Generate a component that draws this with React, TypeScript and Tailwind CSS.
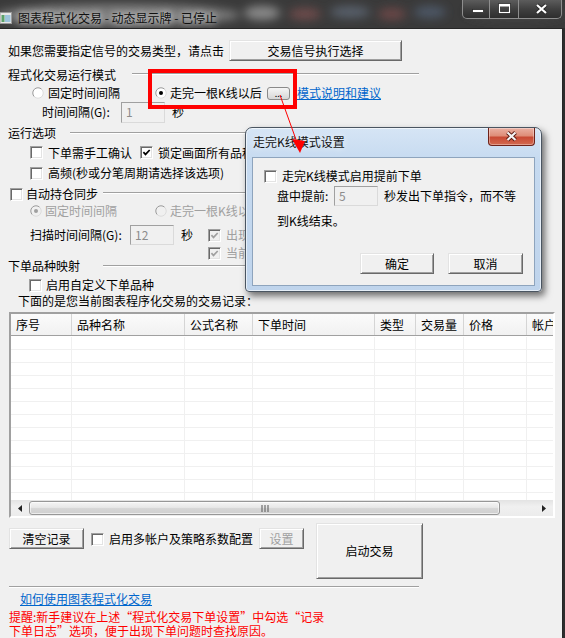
import clsx from "clsx";
import type { ReactNode } from "react";

// Classic Win32 controls, drawn flat with borders + inset shadows.

function Check({ checked = false, disabled = false }: { checked?: boolean; disabled?: boolean }) {
  return (
    <span
      className={clsx(
        "relative block h-[13px] w-[13px] shrink-0 border border-t-[#a0a0a0] border-l-[#a0a0a0] border-r-white border-b-white shadow-[inset_1px_1px_#696969,inset_-1px_-1px_#e3e3e3]",
        disabled ? "bg-[#f0f0f0]" : "bg-white",
      )}
    >
      {checked && (
        <svg className="absolute left-0 top-0" width="11" height="11" viewBox="0 0 11 11">
          <path d="M2.4 5.2 L4.5 7.4 L8.7 3" fill="none" stroke={disabled ? "#a0a0a0" : "#000"} strokeWidth="1.7" />
        </svg>
      )}
    </span>
  );
}

function Radio({ checked = false, disabled = false }: { checked?: boolean; disabled?: boolean }) {
  return (
    <svg className="shrink-0" width="12" height="12" viewBox="0 0 12 12">
      <circle cx="6" cy="6" r="5.2" fill={disabled ? "#f0f0f0" : "#fff"} />
      <path d="M2.3 9.7 A5.2 5.2 0 0 1 9.7 2.3" fill="none" stroke="#9a9a9a" strokeWidth="1" />
      <path d="M9.7 2.3 A5.2 5.2 0 0 1 2.3 9.7" fill="none" stroke="#dcdcdc" strokeWidth="1" />
      {checked && <circle cx="6" cy="6" r="2" fill={disabled ? "#a0a0a0" : "#000"} />}
    </svg>
  );
}

function WinButton({ children, className, disabled }: { children: ReactNode; className?: string; disabled?: boolean }) {
  return (
    <div
      className={clsx(
        "flex shrink-0 items-center justify-center border border-t-[#e3e3e3] border-l-[#e3e3e3] border-r-[#696969] border-b-[#696969] bg-[#f0f0f0] shadow-[inset_1px_1px_#fff,inset_-1px_-1px_#a0a0a0]",
        disabled ? "text-[#a0a0a0]" : "text-black",
        className,
      )}
    >
      {children}
    </div>
  );
}

function Field({ value, className }: { value: string; className?: string }) {
  return (
    <div
      className={clsx(
        "flex shrink-0 items-center border border-t-[#a0a0a0] border-l-[#a0a0a0] border-r-[#dadada] border-b-[#dadada] bg-[#f0f0f0] pl-[4px] text-[#8c8c8c]",
        className,
      )}
    >
      {value}
    </div>
  );
}

function Etch({ className }: { className?: string }) {
  return <div className={clsx("h-[2px] shrink-0 border-t border-b border-t-[#a0a0a0] border-b-white", className)} />;
}

const COLUMNS = [
  { label: "序号", w: "w-[61px]" },
  { label: "品种名称", w: "w-[113px]" },
  { label: "公式名称", w: "w-[68px]" },
  { label: "下单时间", w: "w-[122px]" },
  { label: "类型", w: "w-[41px]" },
  { label: "交易量", w: "w-[48px]" },
  { label: "价格", w: "w-[63px]" },
  { label: "帐户", w: "w-[60px]" },
];

function TitleBar() {
  return (
    <div className="relative flex h-[28px] w-[565px] shrink-0 overflow-hidden">
      {/* blurred desktop behind the glass */}
      <svg className="absolute left-0 top-0" width="565" height="28">
        <defs>
          <filter id="glass" x="-20%" y="-100%" width="140%" height="300%">
            <feGaussianBlur stdDeviation="5" />
          </filter>
        </defs>
        <rect width="565" height="28" fill="#3a3a3a" />
        <g filter="url(#glass)">
          <ellipse cx="118" cy="15" rx="122" ry="11" fill="#7c7c7c" />
          <ellipse cx="262" cy="13" rx="18" ry="7" fill="#8a8a8a" />
          <ellipse cx="305" cy="14" rx="16" ry="6" fill="#6e4c4c" />
          <ellipse cx="350" cy="12" rx="20" ry="6" fill="#58606c" />
          <ellipse cx="392" cy="14" rx="14" ry="6" fill="#6a4646" />
          <ellipse cx="430" cy="12" rx="16" ry="6" fill="#4e5868" />
          <ellipse cx="515" cy="12" rx="50" ry="8" fill="#444" />
        </g>
      </svg>

      <div className="relative flex h-[19px] items-center self-end pb-[1px]">
        <svg width="12" height="12" viewBox="0 0 12 12">
          <rect x="0" y="0.5" width="11.5" height="11" fill="#e6e6e6" stroke="#9a9a9a" />
          <rect x="1.5" y="3" width="3" height="7" fill="#5aa26a" />
          <rect x="5" y="3" width="5.5" height="7" fill="#9cc4dc" />
        </svg>
        <span className="ml-[6px] text-[12px] text-[#111] [text-shadow:0_0_6px_rgba(255,255,255,0.85),0_0_12px_rgba(255,255,255,0.5)]">
          图表程式化交易 - 动态显示牌 - 已停止
        </span>
      </div>

      <div className="relative ml-auto mr-[3px] flex h-[19px] self-start overflow-hidden rounded-b-[5px] border border-t-0 border-[#8e8e8e] bg-[linear-gradient(180deg,#5c5c5c,#404040_50%,#2e2e2e)]">
        <div className="w-[27px] border-r border-r-[#8e8e8e]">
          <svg width="26" height="18">
            <rect x="9.5" y="9.5" width="11" height="3" fill="#fff" stroke="#2a2a2a" strokeWidth="0.8" />
          </svg>
        </div>
        <div className="w-[29px] border-r border-r-[#8e8e8e]">
          <svg width="28" height="18">
            <rect x="9.5" y="4.5" width="10" height="8" fill="none" stroke="#2a2a2a" strokeWidth="2.6" />
            <rect x="9.5" y="4.5" width="10" height="8" fill="none" stroke="#fff" strokeWidth="1.2" />
            <rect x="9" y="4" width="11" height="2.5" fill="#fff" />
          </svg>
        </div>
        <div className="w-[42px]">
          <svg width="42" height="18">
            <path d="M18 5 L27 13 M27 5 L18 13" stroke="#2a2a2a" strokeWidth="4" />
            <path d="M18 5 L27 13 M27 5 L18 13" stroke="#fff" strokeWidth="2.2" />
          </svg>
        </div>
      </div>
    </div>
  );
}

function TradeTable() {
  return (
    <div className="ml-[9px] mt-[4px] flex h-[206px] w-[546px] shrink-0 flex-col border-2 border-t-[#a0a0a0] border-l-[#a0a0a0] border-r-white border-b-white bg-white">
      <div className="flex h-[22px] shrink-0 overflow-hidden border-b border-b-[#a0a0a0] bg-[linear-gradient(180deg,#fbfbfb,#f1f1f1)]">
        {COLUMNS.map((col) => (
          <div key={col.label} className={clsx(col.w, "flex shrink-0 items-center border-r border-r-[#d5d5d5] pl-[5px]")}>
            {col.label}
          </div>
        ))}
      </div>
      <div className="h-[164px] shrink-0 overflow-hidden pt-[1px]">
        {Array.from({ length: 13 }).map((_, i) => (
          <div key={i} className="flex h-[13px] overflow-hidden border-b border-b-[#f0f0f0]">
            {COLUMNS.map((col) => (
              <div key={col.label} className={clsx(col.w, "shrink-0 border-r border-r-[#f0f0f0]")} />
            ))}
          </div>
        ))}
      </div>
      {/* horizontal scrollbar */}
      <div className="flex h-[16px] shrink-0 items-stretch bg-[linear-gradient(180deg,#e3e3e3,#f0f0f0_40%,#ececec)]">
        <div className="flex w-[18px] shrink-0 items-center justify-center">
          <svg width="4" height="7">
            <path d="M4 0 L0 3.5 L4 7 Z" fill="#222" />
          </svg>
        </div>
        <div className="my-[1px] flex w-[471px] shrink-0 items-center justify-center rounded-[3px] border border-[#979797] bg-[linear-gradient(180deg,#f5f5f5,#e8e8e8_45%,#d6d6d6_55%,#d0d0d0)] shadow-[inset_0_0_0_1px_rgba(255,255,255,0.6)]">
          <svg width="8" height="7">
            <path d="M1 0 V7 M4 0 V7 M7 0 V7" stroke="#555" strokeWidth="1" />
          </svg>
        </div>
        <div className="flex-1" />
        <div className="flex w-[18px] shrink-0 items-center justify-center">
          <svg width="4" height="7">
            <path d="M0 0 L4 3.5 L0 7 Z" fill="#222" />
          </svg>
        </div>
      </div>
    </div>
  );
}

function Client() {
  return (
    <div className="flex h-[610px] w-[563px] shrink-0 flex-col border-t border-r border-[#262626] bg-[#f0f0f0] whitespace-nowrap">
      <div className="mt-[11px] flex h-[21px] items-center pl-[8px]">
        <span className="w-[221px] shrink-0">如果您需要指定信号的交易类型，请点击</span>
        <WinButton className="h-[21px] w-[173px]">交易信号执行选择</WinButton>
      </div>

      <div className="mt-[6px] flex h-[16px] items-center pl-[8px]">
        <span className="w-[124px] shrink-0">程式化交易运行模式</span>
        <Etch className="mt-[6px] w-[287px] self-start" />
      </div>

      <div className="mt-[2px] flex h-[17px] items-center pl-[32px]">
        <Radio />
        <span className="ml-[4px] w-[107px] shrink-0">固定时间间隔</span>
        <Radio checked />
        <span className="ml-[3px] w-[97px] shrink-0">走完一根K线以后</span>
        <div className="flex h-[13px] w-[23px] shrink-0 items-end justify-center rounded-[3px] border border-[#8a8a8a] bg-[linear-gradient(180deg,#f6f6f6,#e6e6e6_50%,#d6d6d6)] text-[9px] leading-[10px]">
          ...
        </div>
        <span className="ml-[7px] text-[#0066cc] underline">模式说明和建议</span>
      </div>

      <div className="flex h-[21px] items-center pl-[42px]">
        <span className="w-[79px] shrink-0">时间间隔(G):</span>
        <Field value="1" className="h-[21px] w-[44px]" />
        <span className="ml-[7px]">秒</span>
      </div>

      <div className="mt-[2px] flex h-[16px] items-center pl-[8px]">
        <span className="w-[62px] shrink-0">运行选项</span>
        <Etch className="mt-[7px] w-[349px] self-start" />
      </div>

      <div className="mt-[3px] flex h-[18px] items-center pl-[30px]">
        <Check />
        <span className="ml-[5px] w-[92px] shrink-0">下单需手工确认</span>
        <Check checked />
        <span className="ml-[5px]">锁定画面所有品种</span>
      </div>

      <div className="mt-[3px] flex h-[18px] items-center pl-[30px]">
        <Check />
        <span className="ml-[5px]">高频(秒或分笔周期请选择该选项)</span>
      </div>

      <div className="mt-[3px] flex h-[18px] items-center pl-[10px]">
        <Check />
        <span className="ml-[3px] w-[77px] shrink-0">自动持仓同步</span>
        <Etch className="mt-[7px] w-[316px] self-start" />
      </div>

      <div className="flex h-[16px] items-center pl-[30px] text-[#a0a0a0]">
        <Radio checked disabled />
        <span className="ml-[3px] w-[110px] shrink-0">固定时间间隔</span>
        <Radio disabled />
        <span className="ml-[3px]">走完一根K线以后</span>
      </div>

      <div className="mt-[6px] flex h-[20px] items-center pl-[30px]">
        <span className="w-[100px] shrink-0">扫描时间间隔(G):</span>
        <Field value="12" className="h-[20px] w-[44px]" />
        <span className="ml-[7px] w-[27px] shrink-0">秒</span>
        <Check checked disabled />
        <span className="ml-[5px] text-[#a0a0a0]">出现反向信号时平仓</span>
      </div>

      <div className="mt-[2px] flex h-[12px] items-center pl-[208px]">
        <Check checked disabled />
        <span className="ml-[5px] text-[#a0a0a0]">当前持仓与信号不一致时同步</span>
      </div>

      <div className="mt-[1px] flex h-[12px] items-center pl-[8px]">
        <span className="w-[95px] shrink-0">下单品种映射</span>
        <Etch className="mt-[5px] w-[316px] self-start" />
      </div>

      <div className="mt-[4px] flex h-[18px] items-center pl-[29px]">
        <Check />
        <span className="ml-[4px]">启用自定义下单品种</span>
      </div>

      <div className="flex h-[14px] items-center pl-[18px]">下面的是您当前图表程序化交易的交易记录：</div>

      <TradeTable />

      <div className="mt-[5px] flex h-[56px] items-start pl-[9px]">
        <WinButton className="mt-[5px] h-[21px] w-[75px]">清空记录</WinButton>
        <div className="ml-[7px] mt-[10px]">
          <Check />
        </div>
        <span className="ml-[5px] mt-[9px] w-[150px] shrink-0">启用多帐户及策略系数配置</span>
        <WinButton disabled className="mt-[5px] h-[21px] w-[45px]">
          设置
        </WinButton>
        <WinButton className="ml-[12px] h-[56px] w-[107px]">启动交易</WinButton>
      </div>

      <Etch className="ml-[9px] mt-[7px] w-[410px]" />

      <div className="mt-[4px] flex h-[14px] items-center pl-[20px]">
        <span className="text-[#0066cc] underline">如何使用图表程式化交易</span>
      </div>

      <div className="mt-[4px] pl-[9px] leading-[14px] text-[#ff0000]">
        <div>提醒:新手建议在上述“程式化交易下单设置”中勾选“记录</div>
        <div>下单日志”选项，便于出现下单问题时查找原因。</div>
      </div>
    </div>
  );
}

function KLineDialog() {
  return (
    <div className="absolute left-[245px] top-[127px] flex h-[165px] w-[297px] flex-col rounded-t-[7px] rounded-b-[4px] border border-[#4a5561] bg-[linear-gradient(180deg,#d6e5f5_0%,#c6daf0_20%,#bfd4ec_100%)] shadow-[inset_0_0_0_1px_rgba(255,255,255,0.6),3px_4px_7px_rgba(0,0,0,0.55)] whitespace-nowrap">
      <div className="flex h-[27px] shrink-0 items-center pl-[7px] text-[#111] [text-shadow:0_0_6px_rgba(255,255,255,0.9)]">
        走完K线模式设置
      </div>

      {/* close caption button */}
      <div className="absolute left-[242px] top-0 h-[18px] w-[47px] overflow-hidden rounded-b-[4px] border border-t-0 border-[#6e2219] bg-[linear-gradient(180deg,#eab0a2_0%,#df8d78_45%,#c94a34_55%,#d36a50_100%)] shadow-[inset_0_0_0_1px_rgba(255,255,255,0.35)]">
        <svg width="45" height="17">
          <path d="M18.5 4.5 L26.5 12 M26.5 4.5 L18.5 12" stroke="#5a1a12" strokeWidth="4" />
          <path d="M18.5 4.5 L26.5 12 M26.5 4.5 L18.5 12" stroke="#f4f4f4" strokeWidth="2.2" />
        </svg>
      </div>

      <div className="ml-[6px] mt-[2px] flex h-[129px] w-[283px] shrink-0 flex-col border border-[#8ea4bd] bg-[#f0f0f0]">
        <div className="mt-[11px] flex h-[14px] items-center pl-[11px]">
          <Check />
          <span className="ml-[5px]">走完K线模式启用提前下单</span>
        </div>
        <div className="mt-[3px] flex h-[20px] items-center pl-[24px]">
          <span className="w-[57px] shrink-0">盘中提前:</span>
          <Field value="5" className="h-[20px] w-[44px]" />
          <span className="ml-[6px]">秒发出下单指令，而不等</span>
        </div>
        <div className="mt-[8px] flex h-[14px] items-center pl-[24px]">到K线结束。</div>
        <div className="mt-[25px] flex gap-[14px] pl-[107px]">
          <WinButton className="h-[21px] w-[74px]">确定</WinButton>
          <WinButton className="h-[21px] w-[75px]">取消</WinButton>
        </div>
      </div>
    </div>
  );
}

export default function App() {
  return (
    <div className="relative h-[638px] w-[565px] overflow-hidden bg-[#2e2e2e] font-['Noto_Sans_CJK_SC','Liberation_Sans',sans-serif] text-[12px] leading-[14px] text-black">
      <TitleBar />
      <Client />

      {/* annotation: red highlight around the K-line mode option */}
      <div className="pointer-events-none absolute left-[148px] top-[69px] h-[40px] w-[149px] border-4 border-[#ff0000]" />

      <KLineDialog />

      {/* annotation arrow from the "..." button to the dialog */}
      <svg className="pointer-events-none absolute left-0 top-0" width="565" height="638">
        <line x1="280" y1="95" x2="296.5" y2="141" stroke="#ff0000" strokeWidth="1" />
        <polygon points="292,139 305,141 300,153" fill="#ff0000" />
      </svg>
    </div>
  );
}
